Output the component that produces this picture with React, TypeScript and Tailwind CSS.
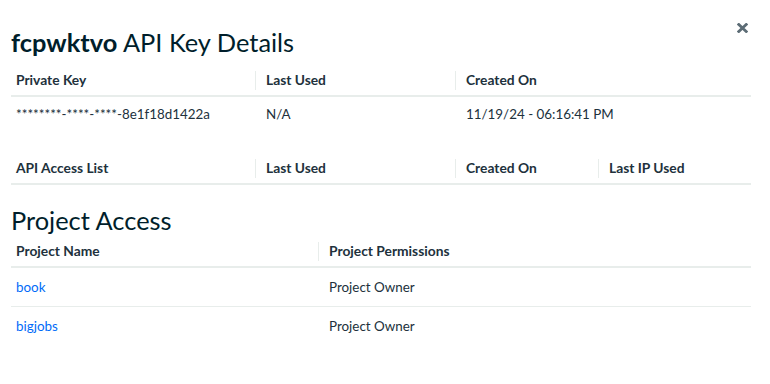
import React from 'react';

const font = { fontFamily: '"Lato", "Liberation Sans", sans-serif' };

type Col = { label: string; width: string };

function HeaderRow({ cols }: { cols: Col[] }) {
  return (
    <div className="flex h-[32px] border-b-2 border-[#e8edeb]">
      {cols.map((c, i) => (
        <div key={c.label} className={`${c.width} flex items-center`}>
          {i > 0 && <span className="h-[19px] w-px bg-[#e8edeb]" />}
          <span className={`${i > 0 ? 'pl-[10px]' : 'pl-[5px]'} text-[13.8px] font-bold text-[#21313c]`}>
            {c.label}
          </span>
        </div>
      ))}
    </div>
  );
}

export default function App() {
  return (
    <div className="relative h-[384px] w-[770px] bg-white text-[#21313c]" style={font}>
      {/* close */}
      <button className="absolute left-[737px] top-[23px] text-[#5c6c75]">
        <svg width="11" height="10" viewBox="0 0 11 10">
          <path d="M1.8 1.5 L9.2 8.5 M9.2 1.5 L1.8 8.5" stroke="currentColor" strokeWidth="2.8" strokeLinecap="square" />
        </svg>
      </button>

      <div className="pl-[11px] pt-[26px] w-[751px]">
        <h1 className="text-[25.4px] leading-[32px] text-[#001e2b]">
          <span className="font-bold">fcpwktvo</span> API Key Details
        </h1>

        {/* private key table */}
        <div className="mt-[7px]">
          <HeaderRow
            cols={[
              { label: 'Private Key', width: 'w-[244px]' },
              { label: 'Last Used', width: 'w-[200px]' },
              { label: 'Created On', width: 'flex-1' },
            ]}
          />
          <div className="flex h-[35px] items-center text-[13.4px]">
            <div className="w-[244px] pl-[5px]">********-****-****-8e1f18d1422a</div>
            <div className="w-[200px] pl-[11px]">N/A</div>
            <div className="flex-1 pl-[11px]">11/19/24 - 06:16:41 PM</div>
          </div>
        </div>

        {/* access list table */}
        <div className="mt-[21px]">
          <HeaderRow
            cols={[
              { label: 'API Access List', width: 'w-[244px]' },
              { label: 'Last Used', width: 'w-[200px]' },
              { label: 'Created On', width: 'w-[143px]' },
              { label: 'Last IP Used', width: 'flex-1' },
            ]}
          />
        </div>

        <h2 className="mt-[19px] text-[25.4px] leading-[32px] text-[#001e2b]">Project Access</h2>

        <div>
          <HeaderRow
            cols={[
              { label: 'Project Name', width: 'w-[307px]' },
              { label: 'Project Permissions', width: 'flex-1' },
            ]}
          />
          {['book', 'bigjobs'].map((p, i) => (
            <div
              key={p}
              className={`flex h-[39px] items-center text-[13.4px] ${i === 0 ? 'border-b border-[#e8edeb]' : ''}`}
            >
              <div className="w-[307px] pl-[5px] text-[#016bf8]">{p}</div>
              <div className="flex-1 pl-[11px]">Project Owner</div>
            </div>
          ))}
        </div>
      </div>
    </div>
  );
}
